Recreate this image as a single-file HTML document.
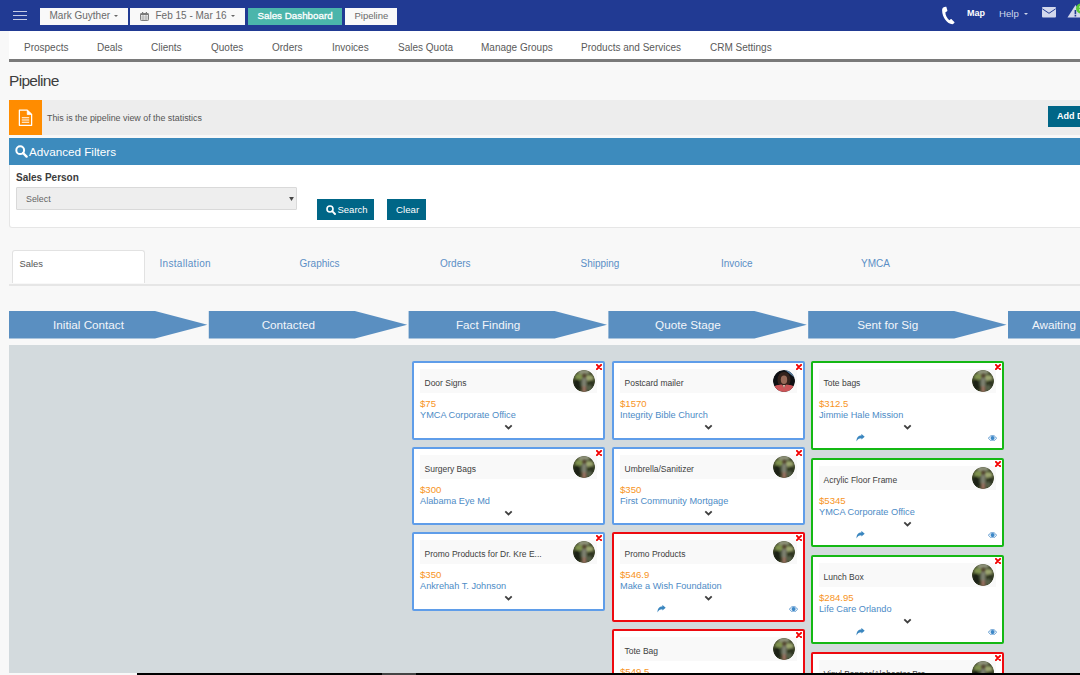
<!DOCTYPE html>
<html><head><meta charset="utf-8">
<style>
*{box-sizing:border-box;margin:0;padding:0}
html,body{width:1080px;height:675px;overflow:hidden;background:#f8f8f8;font-family:"Liberation Sans",sans-serif;position:relative}
.a{position:absolute;white-space:nowrap}
#hdr{position:absolute;left:0;top:0;width:1080px;height:31px;background:#213a93}
.hb{position:absolute;left:13px;width:14px;height:1.6px;background:#c5cbe4}
.hbtn{position:absolute;top:8px;height:17px;background:#f9f9f9;color:#6a6a6a;font-size:10px;line-height:15px}
.caret{display:inline-block;width:0;height:0;border-left:2.5px solid transparent;border-right:2.5px solid transparent;border-top:2.5px solid #666}
#nav{position:absolute;left:9px;top:31px;width:1071px;height:31px;background:#fff;border-bottom:3px solid #7a7a7a}
.ni{position:absolute;top:11px;font-size:10px;color:#5a5a5a;line-height:12px}
#ttl{position:absolute;left:9px;top:70.5px;font-size:15.5px;color:#3d3d3d;line-height:20px;letter-spacing:-0.7px}
#info{position:absolute;left:9px;top:100px;width:1071px;height:35px;background:#ededed}
#ob{position:absolute;left:0;top:0;width:33px;height:35px;background:#ff8c00}
#fh{position:absolute;left:9px;top:138px;width:1071px;height:27px;background:#3d8bbd}
#fb{position:absolute;left:9px;top:165px;width:1075px;height:62.5px;background:#fff;border:1px solid #e6e6e6;border-top:0;border-radius:0 0 3px 3px}
.btn{position:absolute;background:#006687;color:#fff;font-size:10px}
#tabs{position:absolute;left:9px;top:283.5px;width:1071px;height:2px;background:#e6e6e6}
.tab{position:absolute;top:258px;font-size:10px;color:#5b8fc6;line-height:12px}
.arr{position:absolute;top:311px;width:199px;height:27px}
.arr span{position:absolute;top:0;line-height:27px;font-size:11.7px;color:#f2f5fa;transform:translateX(-50%)}
#grey{position:absolute;left:9px;top:345px;width:1071px;height:328px;background:#d3dadd}
.card{position:absolute;width:193px;background:#fff;border:2px solid #5f9de9;border-radius:2px}
.card.r{border-color:#ee0a10}
.card.g{border-color:#14b814}
.ch{position:absolute;left:6px;top:6px;width:177px;height:24px;background:#f9f9f9}
.ct{position:absolute;left:4.5px;top:7.7px;font-size:8.5px;color:#404040;line-height:12px;white-space:nowrap}
.av{position:absolute;left:153px;top:1px;width:22px;height:22px;border-radius:50%;overflow:hidden}
.x{position:absolute;left:182px;top:1px;width:6px;height:6px}
.pr{position:absolute;left:6px;top:34.7px;font-size:9.6px;color:#f7941d;line-height:12px;white-space:nowrap}
.co{position:absolute;left:6px;top:45.6px;font-size:9.2px;color:#4d8bc6;line-height:12px;white-space:nowrap}
.chev{position:absolute;left:90px;top:61px;width:9px;height:6px}
.sh{position:absolute;left:42.8px;top:70.5px;width:9px;height:8px}
.eye{position:absolute;left:174.5px;top:71.5px;width:9px;height:6.4px}
#sb{position:absolute;left:137px;top:673px;width:943px;height:2px;background:#000}
</style></head><body>
<svg width="0" height="0" style="position:absolute"><defs>
<filter id="bl" x="-20%" y="-20%" width="140%" height="140%"><feGaussianBlur stdDeviation="0.9"/></filter>
<filter id="bl2" x="-20%" y="-20%" width="140%" height="140%"><feGaussianBlur stdDeviation="0.6"/></filter>
<clipPath id="cc"><circle cx="11" cy="11" r="11"/></clipPath>
<symbol id="avg" viewBox="0 0 22 22"><g clip-path="url(#cc)"><rect width="22" height="22" fill="#3e4429"/>
<g filter="url(#bl)"><ellipse cx="6.5" cy="7" rx="4.5" ry="3.5" fill="#7f9250"/><ellipse cx="16" cy="8" rx="4.5" ry="3" fill="#9ba56e"/><ellipse cx="4" cy="15" rx="4" ry="6" fill="#1e2414"/><ellipse cx="18" cy="15" rx="3.5" ry="5" fill="#2f3520"/><ellipse cx="11" cy="2" rx="6" ry="2.5" fill="#8f937a"/><ellipse cx="16" cy="18" rx="3" ry="3" fill="#56604a"/></g>
<g filter="url(#bl)"><rect x="9" y="8" width="4.5" height="9" fill="#7d8070"/><ellipse cx="11.2" cy="6" rx="1.8" ry="2.2" fill="#54402f"/><rect x="9.3" y="16.5" width="3.8" height="6" fill="#9a7060"/><rect x="7" y="10" width="2" height="6" fill="#3e4834"/></g>
</g></symbol>
<symbol id="avw" viewBox="0 0 22 22"><g clip-path="url(#cc)"><rect width="22" height="22" fill="#0f1013"/><path d="M12 0H22V8Z" fill="#5a7fa0"/>
<g filter="url(#bl2)"><ellipse cx="11" cy="10" rx="6.5" ry="8" fill="#34241c"/><ellipse cx="11" cy="9.8" rx="3.2" ry="4.2" fill="#9a6a58"/><path d="M0 22V17.5C3 14.5 7 15 9 14.5L11 18L13 14.5C15 15 19 14.5 22 17.5V22Z" fill="#cc5458"/><path d="M9.6 15L11 18.2L12.4 15Z" fill="#d8b0a0"/></g>
</g></symbol>
</defs></svg>

<div id="hdr">
  <div class="hb" style="top:10.5px"></div>
  <div class="hb" style="top:14.5px"></div>
  <div class="hb" style="top:18.5px"></div>
  <div class="hbtn" style="left:40px;width:88px"><span class="a" style="left:9.5px">Mark Guyther</span><span class="caret a" style="left:74px;top:7px"></span></div>
  <div class="hbtn" style="left:130px;width:115px"><span class="a" style="left:25.5px">Feb 15 - Mar 16</span><span class="caret a" style="left:101px;top:7px"></span></div>
  <div class="hbtn" style="left:248px;width:94px;background:#4bb5ab;color:#fff"><span class="a" style="left:9.5px;top:0.3px;font-size:9.8px;-webkit-text-stroke:0.3px #fff">Sales Dashboard</span></div>
  <div class="hbtn" style="left:345px;width:52px"><span class="a" style="left:9.5px;font-size:9.5px">Pipeline</span></div>

  <svg class="a" style="left:140px;top:12px" width="9" height="9" viewBox="0 0 9 9"><rect x="0.5" y="1.5" width="8" height="7" rx="0.8" fill="none" stroke="#7a7a7a" stroke-width="1"/><rect x="0.5" y="1.5" width="8" height="1.6" fill="#7a7a7a"/><rect x="2" y="0" width="1.2" height="2" fill="#7a7a7a"/><rect x="5.8" y="0" width="1.2" height="2" fill="#7a7a7a"/><path d="M0.5 5H8.5M0.5 7H8.5M3 3V8.5M6 3V8.5" stroke="#9a9a9a" stroke-width="0.7"/></svg>
  <svg class="a" style="left:941px;top:6px" width="15" height="19" viewBox="0 0 15 19"><path d="M2.2 1.6C3 1 4.2 0.6 5.3 0.8L6.4 4.6C6.5 5.1 6.2 5.4 5.8 5.6L4.4 6.2C4.3 9 6 12.3 8.3 14.2L9.6 13.3C10 13 10.5 13.1 10.8 13.4L13.6 16.2C13.2 17.2 12.3 18 11.3 18.3C6.2 18.2 1.2 11.2 1.1 4.6C1.1 3.3 1.4 2.2 2.2 1.6Z" fill="#fff"/></svg>
  <span class="caret a" style="left:1024px;top:12.5px;border-top-color:#d0d6ea"></span>
  <svg class="a" style="left:1042px;top:7px" width="14" height="11" viewBox="0 0 14 11"><rect x="0" y="0" width="14" height="10.5" rx="1" fill="#d3d8ec"/><path d="M0.3 1.8L7 6.3L13.7 1.8" fill="none" stroke="#213a93" stroke-width="1"/></svg>
  <svg class="a" style="left:1067px;top:3px" width="13" height="15" viewBox="0 0 13 15"><path d="M8.5 2L0.5 14.5H16.5Z" fill="#d3d8ec"/><rect x="7.6" y="7" width="1.6" height="4.3" fill="#213a93"/><rect x="7.6" y="12" width="1.6" height="1.5" fill="#213a93"/><circle cx="14" cy="5.5" r="5" fill="#5cc83a"/><path d="M12 4H15M12 7H15" stroke="#e6f7df" stroke-width="1.2"/></svg>
  <span class="a" style="left:967px;top:7px;font-size:9px;font-weight:bold;color:#fff;line-height:12px">Map</span>
  <span class="a" style="left:999px;top:8px;font-size:9.6px;color:#d0d6ea;line-height:12px">Help</span>
</div>
<div id="nav">
  <span class="ni" style="left:15px">Prospects</span>
  <span class="ni" style="left:88px">Deals</span>
  <span class="ni" style="left:142px">Clients</span>
  <span class="ni" style="left:202px">Quotes</span>
  <span class="ni" style="left:263px">Orders</span>
  <span class="ni" style="left:323px">Invoices</span>
  <span class="ni" style="left:389px">Sales Quota</span>
  <span class="ni" style="left:472px">Manage Groups</span>
  <span class="ni" style="left:572px">Products and Services</span>
  <span class="ni" style="left:701px">CRM Settings</span>
</div>
<div id="ttl">Pipeline</div>
<div id="info">
  <div id="ob"><svg class="a" style="left:9px;top:9px" width="15" height="17.5" viewBox="0 0 15 18"><path d="M1.2 1.2H9.3L13.8 5.7V16.8H1.2Z" fill="none" stroke="#fff" stroke-width="1.3" stroke-linejoin="round"/><path d="M9.3 1.2V5.7H13.8Z" fill="#fff" stroke="#fff" stroke-width="0.8" stroke-linejoin="round"/><path d="M3.7 9H11.3M3.7 11.3H11.3M3.7 13.6H11.3" stroke="#fff" stroke-width="1.2"/></svg></div>
  <span class="a" style="left:38px;top:12px;font-size:8.9px;color:#555;line-height:12px">This is the pipeline view of the statistics</span>
  <div class="btn" style="left:1039px;top:6px;width:60px;height:21px;line-height:21px;font-weight:bold;font-size:9px"><span class="a" style="left:9px">Add Deal</span></div>
</div>
<div id="fh"><svg class="a" style="left:6px;top:7px" width="13" height="13" viewBox="0 0 13 13"><circle cx="5.2" cy="5.2" r="3.9" fill="none" stroke="#fff" stroke-width="2"/><path d="M8 8L11.6 11.6" stroke="#fff" stroke-width="2.4" stroke-linecap="round"/></svg><span class="a" style="left:20px;top:0;line-height:27px;font-size:11.7px;color:#fff">Advanced Filters</span></div>
<div id="fb">
  <span class="a" style="left:6px;top:6.5px;font-size:10px;font-weight:bold;color:#3b3b3b;line-height:12px">Sales Person</span>
  <div class="a" style="left:6px;top:22px;width:281px;height:23px;background:#eee;border:1px solid #d9d9d9;border-radius:1px"><span class="a" style="left:9px;top:5px;font-size:8.9px;color:#666;line-height:12px">Select</span><svg class="a" style="left:271.5px;top:8.5px" width="5" height="4" viewBox="0 0 6 5"><path d="M0 0H6L3 5Z" fill="#444"/></svg></div>
  <div class="btn" style="left:306.5px;top:34px;width:57.5px;height:21px"><svg class="a" style="left:9px;top:6px" width="10" height="10" viewBox="0 0 10 10"><circle cx="4" cy="4" r="3" fill="none" stroke="#fff" stroke-width="1.6"/><path d="M6.2 6.2L9 9" stroke="#fff" stroke-width="1.9" stroke-linecap="round"/></svg><span class="a" style="left:21px;top:4.7px;font-size:9.5px;line-height:12px">Search</span></div>
  <div class="btn" style="left:377px;top:34px;width:39px;height:21px"><span class="a" style="left:9px;top:4.7px;font-size:9.7px;line-height:12px">Clear</span></div>
</div>
<div class="a" style="left:12px;top:250px;width:133px;height:33px;background:#fff;border:1px solid #e2e2e2;border-bottom:0;border-radius:3px 3px 0 0"></div>
<div id="tabs"></div>
<span class="tab" style="left:19.5px;color:#555;font-size:9.4px">Sales</span>
<span class="tab" style="left:159.5px;letter-spacing:0.3px">Installation</span>
<span class="tab" style="left:299.5px">Graphics</span>
<span class="tab" style="left:440px">Orders</span>
<span class="tab" style="left:580.5px">Shipping</span>
<span class="tab" style="left:721px">Invoice</span>
<span class="tab" style="left:861px">YMCA</span>
<svg class="a" style="left:0;top:311px" width="1080" height="28"><polygon points="9,0 155,0 207.4,13.75 155,27.5 9,27.5" fill="#5a8fc1"/><polygon points="208.8,0 354.8,0 407.2,13.75 354.8,27.5 208.8,27.5" fill="#5a8fc1"/><polygon points="408.6,0 554.6,0 607,13.75 554.6,27.5 408.6,27.5" fill="#5a8fc1"/><polygon points="608.4,0 754.4,0 806.8,13.75 754.4,27.5 608.4,27.5" fill="#5a8fc1"/><polygon points="808.2,0 954.2,0 1006.6,13.75 954.2,27.5 808.2,27.5" fill="#5a8fc1"/><polygon points="1008,0 1154,0 1206.4,13.75 1154,27.5 1008,27.5" fill="#5a8fc1"/></svg>
<span class="a" style="left:88.5px;top:311px;line-height:27px;font-size:11.7px;color:#f2f5fa;transform:translateX(-50%)">Initial Contact</span><span class="a" style="left:288.3px;top:311px;line-height:27px;font-size:11.7px;color:#f2f5fa;transform:translateX(-50%)">Contacted</span><span class="a" style="left:488.1px;top:311px;line-height:27px;font-size:11.7px;color:#f2f5fa;transform:translateX(-50%)">Fact Finding</span><span class="a" style="left:687.9px;top:311px;line-height:27px;font-size:11.7px;color:#f2f5fa;transform:translateX(-50%)">Quote Stage</span><span class="a" style="left:887.7px;top:311px;line-height:27px;font-size:11.7px;color:#f2f5fa;transform:translateX(-50%)">Sent for Sig</span><span class="a" style="left:1032px;top:311px;line-height:27px;font-size:11.7px;color:#f2f5fa">Awaiting ...</span>
<div id="grey"></div>
<div class="card b" style="left:412px;top:361px;height:79px"><div class="ch"><span class="ct">Door Signs</span><svg class="av" viewBox="0 0 22 22"><use href="#avg"/></svg></div><svg class="x" viewBox="0 0 8 8"><path d="M1.2 1.2L6.8 6.8M6.8 1.2L1.2 6.8" stroke="#f40000" stroke-width="2.6" stroke-linecap="round"/></svg><span class="pr">$75</span><span class="co">YMCA Corporate Office</span><svg class="chev" viewBox="0 0 9 6"><path d="M1.3 1.3L4.5 4.5L7.7 1.3" fill="none" stroke="#3f3f3f" stroke-width="1.8"/></svg></div>
<div class="card b" style="left:412px;top:447px;height:78px"><div class="ch"><span class="ct">Surgery Bags</span><svg class="av" viewBox="0 0 22 22"><use href="#avg"/></svg></div><svg class="x" viewBox="0 0 8 8"><path d="M1.2 1.2L6.8 6.8M6.8 1.2L1.2 6.8" stroke="#f40000" stroke-width="2.6" stroke-linecap="round"/></svg><span class="pr">$300</span><span class="co">Alabama Eye Md</span><svg class="chev" viewBox="0 0 9 6"><path d="M1.3 1.3L4.5 4.5L7.7 1.3" fill="none" stroke="#3f3f3f" stroke-width="1.8"/></svg></div>
<div class="card b" style="left:412px;top:532px;height:79px"><div class="ch"><span class="ct">Promo Products for Dr. Kre E...</span><svg class="av" viewBox="0 0 22 22"><use href="#avg"/></svg></div><svg class="x" viewBox="0 0 8 8"><path d="M1.2 1.2L6.8 6.8M6.8 1.2L1.2 6.8" stroke="#f40000" stroke-width="2.6" stroke-linecap="round"/></svg><span class="pr">$350</span><span class="co">Ankrehah T. Johnson</span><svg class="chev" viewBox="0 0 9 6"><path d="M1.3 1.3L4.5 4.5L7.7 1.3" fill="none" stroke="#3f3f3f" stroke-width="1.8"/></svg></div>
<div class="card b" style="left:612px;top:361px;height:79px"><div class="ch"><span class="ct">Postcard mailer</span><svg class="av" viewBox="0 0 22 22"><use href="#avw"/></svg></div><svg class="x" viewBox="0 0 8 8"><path d="M1.2 1.2L6.8 6.8M6.8 1.2L1.2 6.8" stroke="#f40000" stroke-width="2.6" stroke-linecap="round"/></svg><span class="pr">$1570</span><span class="co">Integrity Bible Church</span><svg class="chev" viewBox="0 0 9 6"><path d="M1.3 1.3L4.5 4.5L7.7 1.3" fill="none" stroke="#3f3f3f" stroke-width="1.8"/></svg></div>
<div class="card b" style="left:612px;top:447px;height:78px"><div class="ch"><span class="ct">Umbrella/Sanitizer</span><svg class="av" viewBox="0 0 22 22"><use href="#avg"/></svg></div><svg class="x" viewBox="0 0 8 8"><path d="M1.2 1.2L6.8 6.8M6.8 1.2L1.2 6.8" stroke="#f40000" stroke-width="2.6" stroke-linecap="round"/></svg><span class="pr">$350</span><span class="co">First Community Mortgage</span><svg class="chev" viewBox="0 0 9 6"><path d="M1.3 1.3L4.5 4.5L7.7 1.3" fill="none" stroke="#3f3f3f" stroke-width="1.8"/></svg></div>
<div class="card r" style="left:612px;top:532px;height:90px"><div class="ch"><span class="ct">Promo Products</span><svg class="av" viewBox="0 0 22 22"><use href="#avg"/></svg></div><svg class="x" viewBox="0 0 8 8"><path d="M1.2 1.2L6.8 6.8M6.8 1.2L1.2 6.8" stroke="#f40000" stroke-width="2.6" stroke-linecap="round"/></svg><span class="pr">$546.9</span><span class="co">Make a Wish Foundation</span><svg class="chev" viewBox="0 0 9 6"><path d="M1.3 1.3L4.5 4.5L7.7 1.3" fill="none" stroke="#3f3f3f" stroke-width="1.8"/></svg><svg class="sh" viewBox="0 0 9 8"><path d="M8.7 2.8L5.4 -0.1V1.5C2.4 1.5 0.5 3.3 0.5 7.6C1.3 5.3 3 4.3 5.4 4.2V5.6Z" fill="#3a86bf"/></svg><svg class="eye" viewBox="0 0 9 6.4"><path d="M0.5 3.2C1.7 1.2 3 0.5 4.5 0.5S7.3 1.2 8.5 3.2C7.3 5.2 6 5.9 4.5 5.9S1.7 5.2 0.5 3.2Z" fill="none" stroke="#4f90cc" stroke-width="0.9"/><circle cx="4.6" cy="3.1" r="2.1" fill="#3d88c8"/></svg></div>
<div class="card r" style="left:612px;top:629px;height:90px"><div class="ch"><span class="ct">Tote Bag</span><svg class="av" viewBox="0 0 22 22"><use href="#avg"/></svg></div><svg class="x" viewBox="0 0 8 8"><path d="M1.2 1.2L6.8 6.8M6.8 1.2L1.2 6.8" stroke="#f40000" stroke-width="2.6" stroke-linecap="round"/></svg><span class="pr">$549.5</span><span class="co">Cheese Company</span><svg class="chev" viewBox="0 0 9 6"><path d="M1.3 1.3L4.5 4.5L7.7 1.3" fill="none" stroke="#3f3f3f" stroke-width="1.8"/></svg><svg class="sh" viewBox="0 0 9 8"><path d="M8.7 2.8L5.4 -0.1V1.5C2.4 1.5 0.5 3.3 0.5 7.6C1.3 5.3 3 4.3 5.4 4.2V5.6Z" fill="#3a86bf"/></svg><svg class="eye" viewBox="0 0 9 6.4"><path d="M0.5 3.2C1.7 1.2 3 0.5 4.5 0.5S7.3 1.2 8.5 3.2C7.3 5.2 6 5.9 4.5 5.9S1.7 5.2 0.5 3.2Z" fill="none" stroke="#4f90cc" stroke-width="0.9"/><circle cx="4.6" cy="3.1" r="2.1" fill="#3d88c8"/></svg></div>
<div class="card g" style="left:811px;top:361px;height:89px"><div class="ch"><span class="ct">Tote bags</span><svg class="av" viewBox="0 0 22 22"><use href="#avg"/></svg></div><svg class="x" viewBox="0 0 8 8"><path d="M1.2 1.2L6.8 6.8M6.8 1.2L1.2 6.8" stroke="#f40000" stroke-width="2.6" stroke-linecap="round"/></svg><span class="pr">$312.5</span><span class="co">Jimmie Hale Mission</span><svg class="chev" viewBox="0 0 9 6"><path d="M1.3 1.3L4.5 4.5L7.7 1.3" fill="none" stroke="#3f3f3f" stroke-width="1.8"/></svg><svg class="sh" viewBox="0 0 9 8"><path d="M8.7 2.8L5.4 -0.1V1.5C2.4 1.5 0.5 3.3 0.5 7.6C1.3 5.3 3 4.3 5.4 4.2V5.6Z" fill="#3a86bf"/></svg><svg class="eye" viewBox="0 0 9 6.4"><path d="M0.5 3.2C1.7 1.2 3 0.5 4.5 0.5S7.3 1.2 8.5 3.2C7.3 5.2 6 5.9 4.5 5.9S1.7 5.2 0.5 3.2Z" fill="none" stroke="#4f90cc" stroke-width="0.9"/><circle cx="4.6" cy="3.1" r="2.1" fill="#3d88c8"/></svg></div>
<div class="card g" style="left:811px;top:458px;height:89px"><div class="ch"><span class="ct">Acrylic Floor Frame</span><svg class="av" viewBox="0 0 22 22"><use href="#avg"/></svg></div><svg class="x" viewBox="0 0 8 8"><path d="M1.2 1.2L6.8 6.8M6.8 1.2L1.2 6.8" stroke="#f40000" stroke-width="2.6" stroke-linecap="round"/></svg><span class="pr">$5345</span><span class="co">YMCA Corporate Office</span><svg class="chev" viewBox="0 0 9 6"><path d="M1.3 1.3L4.5 4.5L7.7 1.3" fill="none" stroke="#3f3f3f" stroke-width="1.8"/></svg><svg class="sh" viewBox="0 0 9 8"><path d="M8.7 2.8L5.4 -0.1V1.5C2.4 1.5 0.5 3.3 0.5 7.6C1.3 5.3 3 4.3 5.4 4.2V5.6Z" fill="#3a86bf"/></svg><svg class="eye" viewBox="0 0 9 6.4"><path d="M0.5 3.2C1.7 1.2 3 0.5 4.5 0.5S7.3 1.2 8.5 3.2C7.3 5.2 6 5.9 4.5 5.9S1.7 5.2 0.5 3.2Z" fill="none" stroke="#4f90cc" stroke-width="0.9"/><circle cx="4.6" cy="3.1" r="2.1" fill="#3d88c8"/></svg></div>
<div class="card g" style="left:811px;top:555px;height:89px"><div class="ch"><span class="ct">Lunch Box</span><svg class="av" viewBox="0 0 22 22"><use href="#avg"/></svg></div><svg class="x" viewBox="0 0 8 8"><path d="M1.2 1.2L6.8 6.8M6.8 1.2L1.2 6.8" stroke="#f40000" stroke-width="2.6" stroke-linecap="round"/></svg><span class="pr">$284.95</span><span class="co">Life Care Orlando</span><svg class="chev" viewBox="0 0 9 6"><path d="M1.3 1.3L4.5 4.5L7.7 1.3" fill="none" stroke="#3f3f3f" stroke-width="1.8"/></svg><svg class="sh" viewBox="0 0 9 8"><path d="M8.7 2.8L5.4 -0.1V1.5C2.4 1.5 0.5 3.3 0.5 7.6C1.3 5.3 3 4.3 5.4 4.2V5.6Z" fill="#3a86bf"/></svg><svg class="eye" viewBox="0 0 9 6.4"><path d="M0.5 3.2C1.7 1.2 3 0.5 4.5 0.5S7.3 1.2 8.5 3.2C7.3 5.2 6 5.9 4.5 5.9S1.7 5.2 0.5 3.2Z" fill="none" stroke="#4f90cc" stroke-width="0.9"/><circle cx="4.6" cy="3.1" r="2.1" fill="#3d88c8"/></svg></div>
<div class="card r" style="left:811px;top:652px;height:89px"><div class="ch"><span class="ct">Vinyl Banner/Alabaster Bra...</span><svg class="av" viewBox="0 0 22 22"><use href="#avg"/></svg></div><svg class="x" viewBox="0 0 8 8"><path d="M1.2 1.2L6.8 6.8M6.8 1.2L1.2 6.8" stroke="#f40000" stroke-width="2.6" stroke-linecap="round"/></svg><span class="pr">$120</span><span class="co">Alabaster</span><svg class="chev" viewBox="0 0 9 6"><path d="M1.3 1.3L4.5 4.5L7.7 1.3" fill="none" stroke="#3f3f3f" stroke-width="1.8"/></svg><svg class="sh" viewBox="0 0 9 8"><path d="M8.7 2.8L5.4 -0.1V1.5C2.4 1.5 0.5 3.3 0.5 7.6C1.3 5.3 3 4.3 5.4 4.2V5.6Z" fill="#3a86bf"/></svg><svg class="eye" viewBox="0 0 9 6.4"><path d="M0.5 3.2C1.7 1.2 3 0.5 4.5 0.5S7.3 1.2 8.5 3.2C7.3 5.2 6 5.9 4.5 5.9S1.7 5.2 0.5 3.2Z" fill="none" stroke="#4f90cc" stroke-width="0.9"/><circle cx="4.6" cy="3.1" r="2.1" fill="#3d88c8"/></svg></div>
<div id="sb"></div><div class="a" style="left:382px;top:673px;width:34px;height:2px;background:#444"></div>
</body></html>
